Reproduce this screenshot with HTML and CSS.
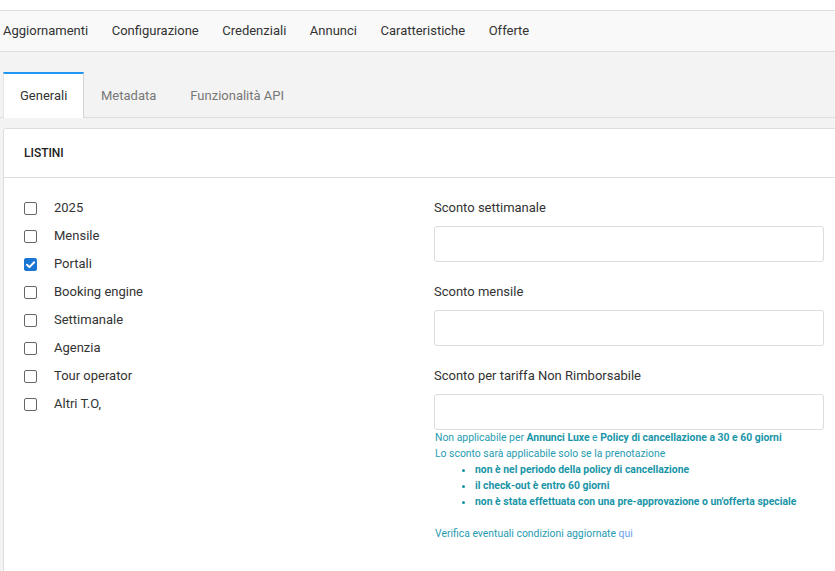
FILE: index.html
```html
<!DOCTYPE html>
<html lang="it">
<head>
<meta charset="utf-8">
<link rel="stylesheet" href="styles.css">
</head>
<body>
<div class="topstrip"></div>
<nav class="mainnav">
  <a>Aggiornamenti</a>
  <a>Configurazione</a>
  <a>Credenziali</a>
  <a>Annunci</a>
  <a>Caratteristiche</a>
  <a>Offerte</a>
</nav>
<div class="content">
  <div class="tabs">
    <div class="tab active">Generali</div>
    <div class="tab">Metadata</div>
    <div class="tab">Funzionalità API</div>
  </div>
  <section class="panel">
    <header class="panel-head">LISTINI</header>
    <div class="panel-body">
      <div class="checklist">
        <label class="check"><span class="box"></span>2025</label>
        <label class="check"><span class="box"></span>Mensile</label>
        <label class="check"><span class="box checked"><svg viewBox="0 0 13 13" width="13" height="13"><path d="M3 6.8 L5.4 9.1 L10.2 4.2" fill="none" stroke="#fff" stroke-width="2" stroke-linecap="round" stroke-linejoin="round"/></svg></span>Portali</label>
        <label class="check"><span class="box"></span>Booking engine</label>
        <label class="check"><span class="box"></span>Settimanale</label>
        <label class="check"><span class="box"></span>Agenzia</label>
        <label class="check"><span class="box"></span>Tour operator</label>
        <label class="check"><span class="box"></span>Altri T.O,</label>
      </div>
      <div class="fields">
        <div class="field">
          <div class="field-label">Sconto settimanale</div>
          <div class="input"></div>
        </div>
        <div class="field">
          <div class="field-label">Sconto mensile</div>
          <div class="input"></div>
        </div>
        <div class="field">
          <div class="field-label">Sconto per tariffa Non Rimborsabile</div>
          <div class="input"></div>
        </div>
        <div class="help">
          <p>Non applicabile per <b>Annunci Luxe</b> e <b>Policy di cancellazione a 30 e 60 giorni</b></p>
          <p>Lo sconto sarà applicabile solo se la prenotazione</p>
          <ul>
            <li>non è nel periodo della policy di cancellazione</li>
            <li>il check-out è entro 60 giorni</li>
            <li>non è stata effettuata con una pre-approvazione o un'offerta speciale</li>
          </ul>
          <p class="verify">Verifica eventuali condizioni aggiornate <a>qui</a></p>
        </div>
      </div>
    </div>
  </section>
</div>
</body>
</html>
```
FILE: styles.css
```css
html, body {
  margin: 0;
  padding: 0;
  height: 100%;
  overflow: hidden;
}
body {
  font-family: Roboto, "Noto Sans", sans-serif;
  font-size: 13px;
  color: #333;
  background: #f3f3f3;
}
.topstrip {
  height: 10px;
  background: #fff;
  border-bottom: 1px solid #dedede;
}
.mainnav {
  display: flex;
  gap: 23.5px;
  height: 41px;
  align-items: center;
  padding-left: 3px;
  padding-bottom: 1px;
  box-sizing: border-box;
  background: #f9f9f9;
  border-bottom: 1px solid #dedede;
  white-space: nowrap;
}
.mainnav a {
  color: #333;
  font-size: 13px;
}
.content {
  padding: 20px 0 0 3px;
}
.tabs {
  display: flex;
  height: 45px;
  border-bottom: 1px solid #dedede;
  margin-left: -3px;
  padding-left: 3px;
}
.tab {
  padding: 0 17px 1px;
  display: flex;
  align-items: center;
  color: #777;
  font-size: 13px;
  border-top: 2px solid transparent;
  box-sizing: border-box;
  height: 45px;
}
.tab.active {
  background: #fff;
  color: #333;
  border-top: 2px solid #2196f3;
  border-left: 1px solid #e4e4e4;
  border-right: 1px solid #d4d4d4;
  height: 46px;
  padding: 0 16px 2px;
  width: 81px;
}
.panel {
  margin-top: 10px;
  background: #fff;
  border: 1px solid #dedede;
  border-radius: 3px 0 0 0;
  width: 900px;
  min-height: 500px;
}
.panel-head {
  height: 48px;
  display: flex;
  align-items: center;
  padding-left: 20px;
  font-size: 12px;
  font-weight: 500;
  color: #222;
  border-bottom: 1px solid #dedede;
}
.panel-body {
  display: grid;
  grid-template-columns: 410px 390px;
  padding: 16px 0 0 20px;
}
.checklist {
  display: flex;
  flex-direction: column;
  margin-top: -1px;
}
.check {
  display: flex;
  align-items: center;
  height: 28px;
  font-size: 13px;
  color: #333;
}
.box {
  width: 13px;
  height: 13px;
  box-sizing: border-box;
  border: 1px solid #666;
  border-radius: 2px;
  margin-right: 17px;
  display: inline-flex;
  position: relative;
  top: 1px;
}
.box.checked {
  background: #1976d2;
  border-color: #1976d2;
}
.box.checked svg {
  margin: -1px;
}
.fields {
  display: flex;
  flex-direction: column;
}
.field + .field {
  margin-top: 16px;
}
.field-label {
  height: 28px;
  line-height: 28px;
  font-size: 13px;
  color: #333;
}
.input {
  margin-top: 4px;
  height: 36px;
  box-sizing: border-box;
  border: 1px solid #dcdcdc;
  border-radius: 3px;
  background: #fff;
}
.help {
  font-size: 10.4px;
  line-height: 16px;
  color: #1f9cb0;
  padding-left: 1px;
}
.help p {
  margin: 0;
}
.help b {
  font-weight: 700;
  color: #1a95a8;
}
.help ul {
  margin: 0;
  padding-left: 40px;
  font-weight: 700;
  color: #1a95a8;
}
.help .verify {
  margin-top: 16px;
}
.help a {
  color: #6b9ee8;
}
```
